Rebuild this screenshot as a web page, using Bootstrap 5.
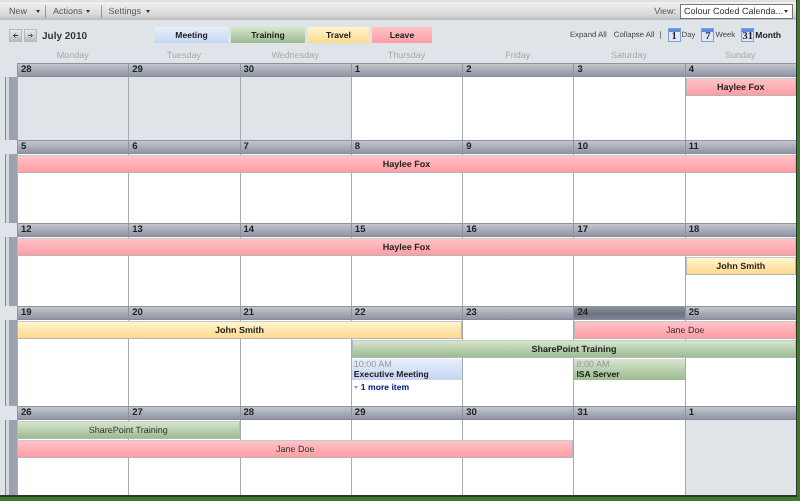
<!DOCTYPE html>
<html lang="en"><head><meta charset="utf-8"><title>July 2010</title>
<link href="https://cdn.jsdelivr.net/npm/bootstrap@5.3.0/dist/css/bootstrap.min.css" rel="stylesheet">
<style>
html,body{margin:0;height:501px;overflow:hidden;background:#3c7a2c}
body{font-family:"Liberation Sans",Arial,sans-serif;font-size:9px;line-height:1.2;color:#222;text-rendering:geometricPrecision}
.shell{width:797px;height:497px;background:#dfe4e8;border-right:1px solid #333;border-bottom:2px solid #333;overflow:hidden;filter:blur(.4px)}
.topbar{height:19px;margin-top:1px;padding:0 3px 0 9px;background:linear-gradient(#f2f2f2,#d8d8d8 70%,#bcbcbc);border-top:1px solid #ddd;color:#555;font-size:9px}
.tsep{width:1px;height:13px;background:#999;margin-right:7px}
.sep-a{margin-left:5px}.sep-b{margin-left:11px}
.caret-mini{width:0;height:0;border:2px solid transparent;border-top:3px solid #333;border-bottom:0}
.car-a{margin-left:9px}.car-b{margin-left:3px}.car-c{margin-left:5px}
.view-sel{width:113px;height:15px;background:#fff;border:1px solid #777;padding:0 4px 0 3px;color:#333;font-size:9px;white-space:nowrap}
.subbar{height:30px;padding:0 15px 0 9px}
.arrow-btn{width:13px;height:13px;background:linear-gradient(#e8e8e8,#b8bcc2);border:1px solid #b4b8c0;margin-right:2px}
.month-title{font-size:10px;font-weight:700;color:#333;margin-left:3px;width:113px;padding-top:4px}
.legend-chip{height:16px;margin-right:3px;text-align:center;font-weight:700;font-size:8.6px;line-height:16px}
.w73{width:73px}.w74{width:74px}.w61{width:61px}.w60{width:60px}
.ev-meet{background:linear-gradient(#e6eefb,#c6d6f2)}
.ev-train{background:linear-gradient(#d6e6cc,#9dbb92)}
.ev-trav{background:linear-gradient(#fff5cf,#ffd98e)}
.ev-leave{background:linear-gradient(#ffc3c7,#ff9da3)}
.tool-link{color:#444;font-size:7.8px}
.tool-bold{font-size:8.6px;color:#222}
.gap-7{margin-right:7px}.gap-6{margin-right:6px}.gap-l5{margin:0 6px 0 5px}
.cal-ico{width:13px;height:14px;background:linear-gradient(#5d8fd8 28%,#dce8f8 28%);border:1px solid #7fa0d0;color:#223;font-family:"Liberation Serif",serif;font-weight:700;font-size:10.5px;line-height:15px;text-align:center;margin-right:1px}
.dayhead{display:grid;grid-template-columns:repeat(7,1fr);margin-left:17px;height:13px;color:#aaa;font-size:9px;text-align:center}
.numrow{display:grid;grid-template-columns:repeat(7,1fr);margin-left:17px;height:14px}
.num{background:linear-gradient(#c3c7ce,#a6abb6 55%,#9096a2);border-top:1px solid #8d93a0;border-bottom:1px solid #858b97;border-left:1px solid #8d93a0;font-weight:700;font-size:9.5px;line-height:12px;padding-left:3px;color:#222}
.num-today{background:linear-gradient(#8d939d,#6d747f 55%,#7d838e)}
.weekbody{display:flex;margin-left:5px}
.rail{width:12px;border-left:1px solid #888;background:linear-gradient(90deg,#d5d9de 0,#d5d9de 3px,#9aa2ad 3px,#9aa2ad 100%)}
.daysgrid{flex:1;display:grid;grid-template-columns:repeat(7,1fr)}
.h63{height:63px}.h69{height:69px}.h86{height:86px}.h75{height:75px}
.r3{grid-template-rows:19px 19px 1fr}
.r4{grid-template-rows:19px 19px 22px 1fr}
.cellbg{grid-row:1/-1;background:#fff;border-left:1px solid #a6abb2}
.cellbg.off{background:#dfe4e8}
.c1{grid-column-start:1}.c2{grid-column-start:2}.c3{grid-column-start:3}.c4{grid-column-start:4}.c5{grid-column-start:5}.c6{grid-column-start:6}.c7{grid-column-start:7}
.s2{grid-column-end:span 2}.s4{grid-column-end:span 4}.s5{grid-column-end:span 5}.s7{grid-column-end:span 7}
.rr1{grid-row:1}.rr2{grid-row:2}.rr3{grid-row:3}.rr4{grid-row:4}
.cal-ev{margin:1px 0 0 1px;text-align:center;font-size:9px;line-height:16px;height:18px;color:#222;border:1px solid #b3b7bc;border-top-color:#c5c9cd;font-weight:700}
.cal-ev.c1{margin-left:0}
.ev-thin{font-weight:400;color:#333}
.tall{height:21px;text-align:left;padding-left:2px;line-height:11px;font-size:8.6px;border:0;margin-top:1px}
.etime{color:#999;font-weight:400;font-size:9px;line-height:10px}
.morelink{font-size:8.6px;font-weight:700;color:#00207a;padding-left:3px;margin-top:2px;align-self:start}
.morelink::before{content:"";display:inline-block;border:2.5px solid transparent;border-top:3px solid #99a;border-bottom:0;margin-right:3px;vertical-align:1px}
</style></head>
<body>
<div class="shell">
 <div class="topbar d-flex align-items-center">
  <span>New</span><span class="caret-mini car-a"></span><span class="tsep sep-a"></span>
  <span>Actions</span><span class="caret-mini car-b"></span><span class="tsep sep-b"></span>
  <span>Settings</span><span class="caret-mini car-c"></span>
  <span class="ms-auto me-1">View:</span>
  <div class="view-sel d-flex align-items-center justify-content-between"><span>Colour Coded Calenda...</span><span class="caret-mini"></span></div>
 </div>
 <div class="subbar d-flex align-items-center">
  <span class="arrow-btn d-flex align-items-center justify-content-center"><svg width="7" height="7" viewBox="0 0 7 7"><path d="M6 3.5H1.5M3.5 1.5l-2 2 2 2" fill="none" stroke="#333"/></svg></span>
  <span class="arrow-btn d-flex align-items-center justify-content-center"><svg width="7" height="7" viewBox="0 0 7 7"><path d="M1 3.5h4.5M3.5 1.5l2 2-2 2" fill="none" stroke="#555"/></svg></span>
  <span class="month-title">July 2010</span>
  <div class="legend-chip w73 ev-meet">Meeting</div>
  <div class="legend-chip w74 ev-train">Training</div>
  <div class="legend-chip w61 ev-trav">Travel</div>
  <div class="legend-chip w60 ev-leave">Leave</div>
  <div class="ms-auto d-flex align-items-center tool-link">
   <span class="gap-7">Expand All</span><span>Collapse All</span><span class="gap-l5">|</span>
   <span class="cal-ico">1</span><span class="gap-6">Day</span>
   <span class="cal-ico">7</span><span class="gap-6">Week</span>
   <span class="cal-ico">31</span><strong class="tool-bold">Month</strong>
  </div>
 </div>
 <div class="dayhead"><span>Monday</span><span>Tuesday</span><span>Wednesday</span><span>Thursday</span><span>Friday</span><span>Saturday</span><span>Sunday</span></div>

 <div class="numrow"><div class="num">28</div><div class="num">29</div><div class="num">30</div><div class="num">1</div><div class="num">2</div><div class="num">3</div><div class="num">4</div></div>
 <div class="weekbody h63"><div class="rail"></div><div class="daysgrid r3">
  <div class="cellbg off c1"></div><div class="cellbg off c2"></div><div class="cellbg off c3"></div><div class="cellbg c4"></div><div class="cellbg c5"></div><div class="cellbg c6"></div><div class="cellbg c7"></div>
  <div class="cal-ev ev-leave c7 rr1">Haylee Fox</div>
 </div></div>

 <div class="numrow"><div class="num">5</div><div class="num">6</div><div class="num">7</div><div class="num">8</div><div class="num">9</div><div class="num">10</div><div class="num">11</div></div>
 <div class="weekbody h69"><div class="rail"></div><div class="daysgrid r3">
  <div class="cellbg c1"></div><div class="cellbg c2"></div><div class="cellbg c3"></div><div class="cellbg c4"></div><div class="cellbg c5"></div><div class="cellbg c6"></div><div class="cellbg c7"></div>
  <div class="cal-ev ev-leave c1 s7 rr1">Haylee Fox</div>
 </div></div>

 <div class="numrow"><div class="num">12</div><div class="num">13</div><div class="num">14</div><div class="num">15</div><div class="num">16</div><div class="num">17</div><div class="num">18</div></div>
 <div class="weekbody h69"><div class="rail"></div><div class="daysgrid r3">
  <div class="cellbg c1"></div><div class="cellbg c2"></div><div class="cellbg c3"></div><div class="cellbg c4"></div><div class="cellbg c5"></div><div class="cellbg c6"></div><div class="cellbg c7"></div>
  <div class="cal-ev ev-leave c1 s7 rr1">Haylee Fox</div>
  <div class="cal-ev ev-trav c7 rr2">John Smith</div>
 </div></div>

 <div class="numrow"><div class="num">19</div><div class="num">20</div><div class="num">21</div><div class="num">22</div><div class="num">23</div><div class="num num-today">24</div><div class="num">25</div></div>
 <div class="weekbody h86"><div class="rail"></div><div class="daysgrid r4">
  <div class="cellbg c1"></div><div class="cellbg c2"></div><div class="cellbg c3"></div><div class="cellbg c4"></div><div class="cellbg c5"></div><div class="cellbg c6"></div><div class="cellbg c7"></div>
  <div class="cal-ev ev-trav c1 s4 rr1">John Smith</div>
  <div class="cal-ev ev-leave c6 s2 rr1 ev-thin">Jane Doe</div>
  <div class="cal-ev ev-train c4 s4 rr2">SharePoint Training</div>
  <div class="cal-ev tall ev-meet c4 rr3"><div class="etime">10:00 AM</div>Executive Meeting</div>
  <div class="cal-ev tall ev-train c6 rr3"><div class="etime">8:00 AM</div>ISA Server</div>
  <div class="morelink c4 rr4">1 more item</div>
 </div></div>

 <div class="numrow"><div class="num">26</div><div class="num">27</div><div class="num">28</div><div class="num">29</div><div class="num">30</div><div class="num">31</div><div class="num">1</div></div>
 <div class="weekbody h75"><div class="rail"></div><div class="daysgrid r3">
  <div class="cellbg c1"></div><div class="cellbg c2"></div><div class="cellbg c3"></div><div class="cellbg c4"></div><div class="cellbg c5"></div><div class="cellbg c6"></div><div class="cellbg off c7"></div>
  <div class="cal-ev ev-train c1 s2 rr1 ev-thin">SharePoint Training</div>
  <div class="cal-ev ev-leave c1 s5 rr2 ev-thin">Jane Doe</div>
 </div></div>
</div>
<script src="https://cdn.jsdelivr.net/npm/bootstrap@5.3.0/dist/js/bootstrap.bundle.min.js"></script>
</body></html>
